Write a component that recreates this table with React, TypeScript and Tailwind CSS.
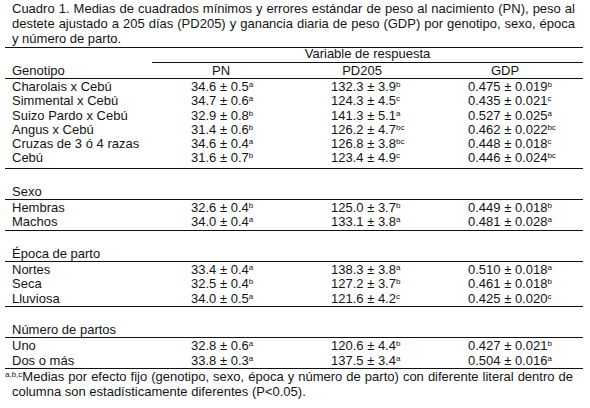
type Val = [string, string];

interface Row {
  name: string;
  pn: Val;
  pd: Val;
  gdp: Val;
}

interface Section {
  title: string;
  rows: Row[];
}

const genotipos: Row[] = [
  { name: "Charolais x Cebú", pn: ["34.6 ± 0.5", "a"], pd: ["132.3 ± 3.9", "b"], gdp: ["0.475 ± 0.019", "b"] },
  { name: "Simmental x Cebú", pn: ["34.7 ± 0.6", "a"], pd: ["124.3 ± 4.5", "c"], gdp: ["0.435 ± 0.021", "c"] },
  { name: "Suizo Pardo x Cebú", pn: ["32.9 ± 0.8", "b"], pd: ["141.3 ± 5.1", "a"], gdp: ["0.527 ± 0.025", "a"] },
  { name: "Angus x Cebú", pn: ["31.4 ± 0.6", "b"], pd: ["126.2 ± 4.7", "bc"], gdp: ["0.462 ± 0.022", "bc"] },
  { name: "Cruzas de 3 ó 4 razas", pn: ["34.6 ± 0.4", "a"], pd: ["126.8 ± 3.8", "bc"], gdp: ["0.448 ± 0.018", "c"] },
  { name: "Cebú", pn: ["31.6 ± 0.7", "b"], pd: ["123.4 ± 4.9", "c"], gdp: ["0.446 ± 0.024", "bc"] },
];

const sections: Section[] = [
  {
    title: "Sexo",
    rows: [
      { name: "Hembras", pn: ["32.6 ± 0.4", "b"], pd: ["125.0 ± 3.7", "b"], gdp: ["0.449 ± 0.018", "b"] },
      { name: "Machos", pn: ["34.0 ± 0.4", "a"], pd: ["133.1 ± 3.8", "a"], gdp: ["0.481 ± 0.028", "a"] },
    ],
  },
  {
    title: "Época de parto",
    rows: [
      { name: "Nortes", pn: ["33.4 ± 0.4", "a"], pd: ["138.3 ± 3.8", "a"], gdp: ["0.510 ± 0.018", "a"] },
      { name: "Seca", pn: ["32.5 ± 0.4", "b"], pd: ["127.2 ± 3.7", "b"], gdp: ["0.461 ± 0.018", "b"] },
      { name: "Lluviosa", pn: ["34.0 ± 0.5", "a"], pd: ["121.6 ± 4.2", "c"], gdp: ["0.425 ± 0.020", "c"] },
    ],
  },
  {
    title: "Número de partos",
    rows: [
      { name: "Uno", pn: ["32.8 ± 0.6", "a"], pd: ["120.6 ± 4.4", "b"], gdp: ["0.427 ± 0.021", "b"] },
      { name: "Dos o más", pn: ["33.8 ± 0.3", "a"], pd: ["137.5 ± 3.4", "a"], gdp: ["0.504 ± 0.016", "a"] },
    ],
  },
];

const grid = "grid grid-cols-[147px_138px_144px_149px]";

function Value({ v }: { v: Val }) {
  return (
    <span>
      {v[0]}
      <sup className="text-[8px]">{v[1]}</sup>
    </span>
  );
}

function DataRow({ row, h }: { row: Row; h: string }) {
  return (
    <div className={`${grid} ${h} items-center whitespace-nowrap`}>
      <div className="pl-[7px]">{row.name}</div>
      <div className="pl-[39px]">
        <Value v={row.pn} />
      </div>
      <div className="pl-[41px]">
        <Value v={row.pd} />
      </div>
      <div className="pl-[34px]">
        <Value v={row.gdp} />
      </div>
    </div>
  );
}

export default function App() {
  return (
    <div className="w-[590px] h-[408px] overflow-hidden bg-white text-[#141414] text-[13px] leading-[15px] font-['Liberation_Sans',Arial,sans-serif]">
      {/* Caption */}
      <div className="ml-[12px] w-[563px] pt-[1px]">
        <div className="text-justify [text-align-last:justify] whitespace-nowrap">
          Cuadro 1. Medias de cuadrados mínimos y errores estándar de peso al nacimiento (PN), peso al
        </div>
        <div className="text-justify [text-align-last:justify] whitespace-nowrap">
          destete ajustado a 205 días (PD205) y ganancia diaria de peso (GDP) por genotipo, sexo, época
        </div>
        <div>y número de parto.</div>
      </div>

      <div className="ml-[5px] w-[578px] mt-[1px] border-t border-[#111]">
        {/* Header */}
        <div className={grid}>
          <div />
          <div className="col-span-3 h-[15px] leading-[12px] text-center border-b border-[#111]">
            Variable de respuesta
          </div>
        </div>
        <div className={`${grid} h-[16px] items-center border-b border-[#111]`}>
          <div className="pl-[7px]">Genotipo</div>
          <div className="text-center">PN</div>
          <div className="text-center">PD205</div>
          <div className="text-center pr-[7px]">GDP</div>
        </div>

        {/* Genotipo */}
        <div className="pb-[3px] border-b border-[#111]">
          {genotipos.map((r) => (
            <DataRow key={r.name} row={r} h="h-[14.3px]" />
          ))}
        </div>

        {sections.map((s) => (
          <div key={s.title} className="pt-[15px] pb-[1px] border-b border-[#111]">
            <div className="h-[16px] leading-[15px] pl-[7px] border-b border-[#111]">{s.title}</div>
            {s.rows.map((r) => (
              <DataRow key={r.name} row={r} h="h-[14.5px]" />
            ))}
          </div>
        ))}

        {/* Footnote */}
        <div className="pr-[10px]">
          <div className="text-justify [text-align-last:justify] whitespace-nowrap">
            <sup className="text-[8px]">a,b,c</sup>Medias por efecto fijo (genotipo, sexo, época y número de parto) con diferente literal dentro de
          </div>
          <div className="pl-[7px]">columna son estadísticamente diferentes (P&lt;0.05).</div>
        </div>
      </div>
    </div>
  );
}
